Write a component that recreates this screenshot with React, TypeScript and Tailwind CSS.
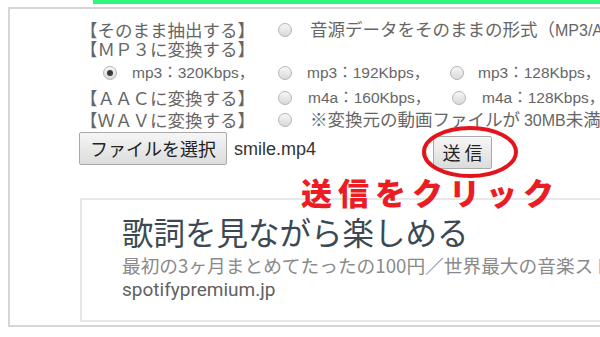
import React from "react";

const jp = { fontFamily: '"Noto Sans CJK JP", "Noto Sans", sans-serif' };
const lat = { fontFamily: '"Liberation Sans", "Noto Sans CJK JP", sans-serif' };

function Radio({ checked = false }: { checked?: boolean }) {
  return (
    <span className="flex h-[14px] w-[14px] shrink-0 items-center justify-center rounded-full border border-[#b4b4b4] bg-gradient-to-b from-[#f7f7f7] to-[#d9d9d9]">
      {checked && <span className="h-[6px] w-[6px] rounded-full bg-[#3a3a3a]" />}
    </span>
  );
}

export default function App() {
  return (
    <div className="relative h-[337px] w-[600px] overflow-hidden bg-white" style={jp}>
      <div className="ml-[93px] h-[4px] bg-[#2cf87b]" />
      <div className="ml-[8px] mt-[3px] h-[320px] w-[640px] border-2 border-[#d6d6d6] pl-[70px]">
        <div className="whitespace-nowrap text-[#666]">
          {/* row 1 */}
          <div className="mt-[11px] flex h-[20px] items-center text-[17.5px] leading-[18px]">
            <span className="w-[198px] shrink-0">【そのまま抽出する】</span>
            <Radio />
            <span className="ml-[18px] shrink-0">
              音源データをそのままの形式（<span style={lat} className="text-[16px]">MP3/AAC</span>）で抽出
            </span>
          </div>
          {/* row 2 */}
          <div className="flex h-[18px] items-center text-[17.5px] leading-[18px]">
            <span className="shrink-0">【ＭＰ３に変換する】</span>
          </div>
          {/* row 3 */}
          <div className="mt-[3px] flex h-[24px] items-center text-[15.5px] leading-[18px]" style={lat}>
            <span className="flex w-[198px] shrink-0 items-center pl-[23px]">
              <Radio checked />
              <span className="ml-[15px]">mp3：320Kbps，</span>
            </span>
            <span className="flex w-[172px] shrink-0 items-center">
              <Radio />
              <span className="ml-[15px]">mp3：192Kbps，</span>
            </span>
            <span className="flex shrink-0 items-center">
              <Radio />
              <span className="ml-[14px]">mp3：128Kbps，</span>
            </span>
          </div>
          {/* row 4 */}
          <div className="mt-[2px] flex h-[22px] items-center leading-[18px]">
            <span className="w-[198px] shrink-0 text-[17.5px]">【ＡＡＣに変換する】</span>
            <span className="flex w-[174px] shrink-0 items-center text-[15.5px]" style={lat}>
              <Radio />
              <span className="ml-[16px]">m4a：160Kbps，</span>
            </span>
            <span className="flex shrink-0 items-center text-[15.5px]" style={lat}>
              <Radio />
              <span className="ml-[16px]">m4a：128Kbps，</span>
            </span>
          </div>
          {/* row 5 */}
          <div className="mt-[1px] flex h-[20px] items-center text-[17.5px] leading-[18px]">
            <span className="w-[198px] shrink-0">【ＷＡＶに変換する】</span>
            <Radio />
            <span className="ml-[18px] shrink-0">
              ※変換元の動画ファイルが <span style={lat} className="text-[16px]">30MB</span>未満の場合
            </span>
          </div>
          {/* row 6 */}
          <div className="mt-[2px] flex items-start">
            <button className="-ml-[1px] h-[33px] w-[148px] shrink-0 rounded-[2px] border border-[#a9a9a9] bg-gradient-to-b from-[#f6f6f6] to-[#dcdcdc] text-[18px] text-[#222]">
              ファイルを選択
            </button>
            <span className="ml-[7px] mt-[4px] shrink-0 text-[18px] text-[#333]" style={lat}>smile.mp4</span>
            <button className="ml-[117px] mt-[4px] h-[33px] w-[59px] shrink-0 rounded-[2px] border border-[#a9a9a9] bg-gradient-to-b from-[#f6f6f6] to-[#dcdcdc] text-[18px] text-[#222]">
              送 信
            </button>
          </div>
        </div>
        {/* ad */}
        <div className="mt-[29px] h-[124px] w-[600px] border-2 border-[#e8e8e8] pl-[40px] pt-[12px]">
          <div className="whitespace-nowrap text-[31.5px] leading-[38px] text-[#3b4a52]">歌詞を見ながら楽しめる</div>
          <div className="mt-[3px] whitespace-nowrap text-[18.7px] leading-[24px] text-[#8a8a8a]">
            最初の3ヶ月まとめてたったの100円／世界最大の音楽ストリーミング
          </div>
          <div className="text-[19px] leading-[26px] text-[#616161]" style={{ fontFamily: 'Roboto, "Liberation Sans", sans-serif' }}>
            spotifypremium.jp
          </div>
        </div>
      </div>

      {/* annotations */}
      <svg className="absolute left-[421px] top-[125px]" width="98" height="54" viewBox="0 0 98 54">
        <ellipse cx="49" cy="27" rx="46" ry="24" fill="none" stroke="#e3141c" strokeWidth="4" />
      </svg>
      <div className="absolute left-[301px] top-[174px] whitespace-nowrap text-[31px] font-black leading-[36px] tracking-[6px] text-[#ec1c24]">
        送信をクリック
      </div>
    </div>
  );
}
